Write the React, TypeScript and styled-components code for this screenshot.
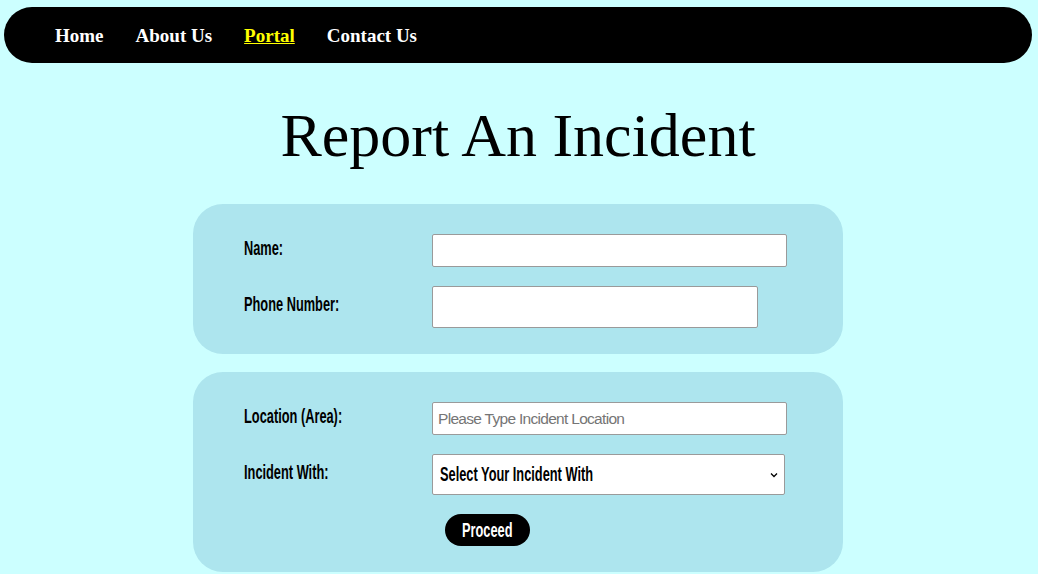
import React from 'react';
import styled, { createGlobalStyle } from 'styled-components';
import * as SelectPrimitive from '@radix-ui/react-select';

const GlobalStyle = createGlobalStyle`
    body {
        margin: 0;
        background: #ccffff;
        font-family: "Liberation Serif", serif;
    }
`

const navItems = ['Home', 'About Us', 'Portal', 'Contact Us'];

export default function App() {
    return (
        <Page>
            <GlobalStyle />
            <NavBar>
                {navItems.map((item) => (
                    <NavLink key={item} href="#" $active={item === 'Portal'}>{item}</NavLink>
                ))}
            </NavBar>
            <Title>Report An Incident</Title>
            <Card>
                <Label><Narrow>Name:</Narrow></Label>
                <TextInput type="text" $w={355} $h={33} />
                <Label><Narrow>Phone Number:</Narrow></Label>
                <TextInput type="text" $w={326} $h={42} />
            </Card>
            <Card>
                <Label><Narrow>Location (Area):</Narrow></Label>
                <TextInput type="text" $w={355} $h={33} placeholder="Please Type Incident Location" />
                <Label><Narrow>Incident With:</Narrow></Label>
                <SelectPrimitive.Root>
                    <SelectTrigger aria-label="Incident With">
                        <Narrow>
                            <SelectPrimitive.Value placeholder="Select Your Incident With" />
                        </Narrow>
                        <SelectPrimitive.Icon asChild>
                            <Chevron width="8" height="6" viewBox="0 0 8 6">
                                <path d="M1 1.5 L4 4.5 L7 1.5" fill="none" stroke="#000" strokeWidth="1.3" />
                            </Chevron>
                        </SelectPrimitive.Icon>
                    </SelectTrigger>
                    <SelectPrimitive.Portal>
                        <SelectContent position="popper">
                            <SelectPrimitive.Viewport>
                                <SelectItem value="person"><SelectPrimitive.ItemText>Person</SelectPrimitive.ItemText></SelectItem>
                                <SelectItem value="vehicle"><SelectPrimitive.ItemText>Vehicle</SelectPrimitive.ItemText></SelectItem>
                                <SelectItem value="property"><SelectPrimitive.ItemText>Property</SelectPrimitive.ItemText></SelectItem>
                            </SelectPrimitive.Viewport>
                        </SelectContent>
                    </SelectPrimitive.Portal>
                </SelectPrimitive.Root>
                <ProceedButton><Narrow>Proceed</Narrow></ProceedButton>
            </Card>
        </Page>
    );
}

const Page = styled.div`
    padding: 7px 6px 0 4px;
`
const NavBar = styled.nav`
    display: flex;
    align-items: center;
    gap: 32px;
    height: 56px;
    padding-left: 51px;
    background: #000;
    border-radius: 28px;
`
const NavLink = styled.a<{ $active?: boolean }>`
    font-family: "Liberation Serif", serif;
    font-size: 19px;
    font-weight: 700;
    color: ${(p) => (p.$active ? '#ffff00' : '#fff')};
    text-decoration: ${(p) => (p.$active ? 'underline' : 'none')};
    transform: translateY(1px);
`
const Title = styled.h1`
    margin: 42px 0 38px;
    font-family: "Liberation Serif", serif;
    font-size: 62px;
    font-weight: 400;
    line-height: 61px;
    text-align: center;
    color: #000;
`
const Card = styled.div`
    display: grid;
    grid-template-columns: 188px auto;
    row-gap: 19px;
    align-items: center;
    width: 650px;
    box-sizing: border-box;
    margin: 0 auto 18px;
    padding: 30px 0 26px 51px;
    background: #ade5ee;
    border-radius: 30px;
`
/* condensed look: the page's narrow face is not installed, so squeeze Liberation Sans */
const Narrow = styled.span`
    display: inline-block;
    white-space: nowrap;
    font-family: "Liberation Sans", Arial, sans-serif;
    font-size: 20px;
    font-weight: 700;
    transform: scaleX(0.64);
    transform-origin: left center;
`
const Label = styled.label`
    color: #000;
    line-height: 20px;
    transform: translateY(-2px);
`
const TextInput = styled.input<{ $w: number; $h: number }>`
    width: ${(p) => p.$w}px;
    height: ${(p) => p.$h}px;
    box-sizing: border-box;
    padding: 0 5px;
    border: 1px solid #9a9a9a;
    border-radius: 2px;
    background: #fff;
    font-family: "Liberation Sans", Arial, sans-serif;
    font-size: 15.5px;
    letter-spacing: -0.7px;
    &::placeholder {
        color: #757575;
    }
`
const SelectTrigger = styled(SelectPrimitive.Trigger)`
    display: flex;
    align-items: center;
    justify-content: space-between;
    width: 353px;
    height: 41px;
    box-sizing: border-box;
    padding: 0 6px 0 7px;
    border: 1px solid #9a9a9a;
    border-radius: 2px;
    background: #fff;
    color: #000;
    text-align: left;
`
const Chevron = styled.svg`
    flex: none;
`
const SelectContent = styled(SelectPrimitive.Content)`
    width: 353px;
    background: #fff;
    border: 1px solid #9a9a9a;
    font-family: "Liberation Sans", Arial, sans-serif;
    font-size: 15px;
`
const SelectItem = styled(SelectPrimitive.Item)`
    padding: 4px 7px;
    outline: none;
    &[data-highlighted] {
        background: #1e90ff;
        color: #fff;
    }
`
const ProceedButton = styled.button`
    grid-column: 2;
    justify-self: start;
    width: 85px;
    height: 32px;
    margin-left: 13px;
    padding: 0 0 0 17px;
    border: none;
    border-radius: 16px;
    background: #000;
    color: #fff;
    text-align: left;
`
